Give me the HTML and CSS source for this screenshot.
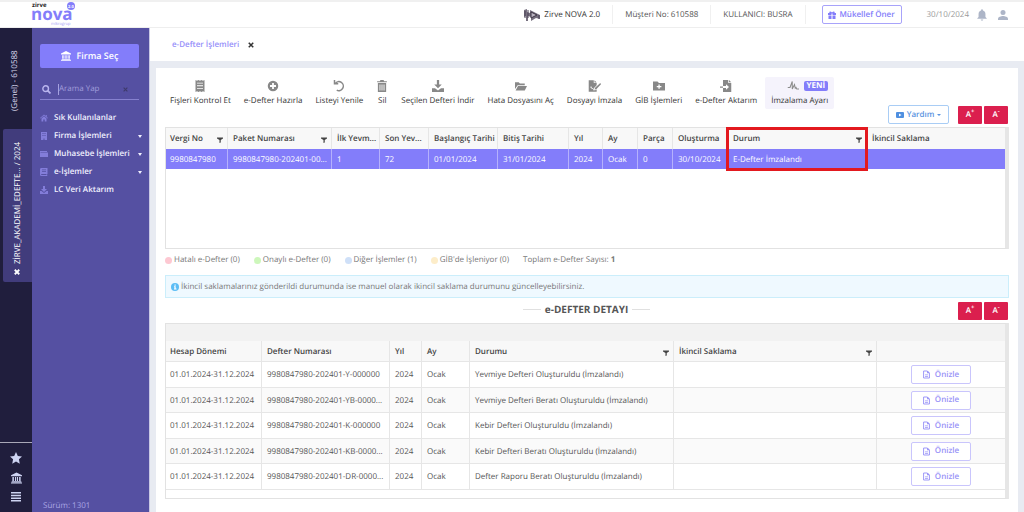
FILE: index.html
```html
<!DOCTYPE html>
<html lang="tr">
<head>
<meta charset="utf-8">
<title>Zirve NOVA - e-Defter İşlemleri</title>
<link rel="stylesheet" href="styles.css">
</head>
<body>
<svg class="sprite" aria-hidden="true">
  <symbol id="bank" viewBox="0 0 16 16"><path d="M8 0 0 4v1.6h16V4zM2 6.6h2.2v5.6H2zm3.8 0h1.6v5.6H5.8zm2.8 0h1.6v5.6H8.600zm3.200 0H14v5.600h-2.200zM1 12.800h14V14H1zM0 14.600h16V16H0z"/></symbol>
  <symbol id="funnel" viewBox="0 0 8 8"><path d="M0 .5h8v1.600L5 4v3.200L3.300 8V4L0 2.100z"/></symbol>
  <symbol id="doc" viewBox="0 0 12 14"><path d="M1 1h6.500L11 4.500V13H1z" fill="none" stroke="currentColor" stroke-width="1.600"/><path d="M7 1v4h4V4L8 1zM3.500 7h5v1.200h-5zm0 2.400h5v1.400h-5z"/></symbol>
</svg>

<div class="app">
  <header class="topbar">
    <a class="logo" href="#" aria-label="zirve nova">
      <svg width="46" height="25" viewBox="0 0 46 25">
        <circle cx="39" cy="4" r="4" fill="#837dfa"/>
        <text x="0" y="5" class="logo-zirve">zirve</text>
        <text x="-1" y="18" class="logo-nova">nova</text>
        <text x="36" y="6" class="logo-ver">2.0</text>
        <text x="19" y="23" class="logo-sub">mikrogrup</text>
      </svg>
    </a>
    <div class="top-items">
      <div class="top-item top-product">
        <svg width="18" height="14" viewBox="0 0 18 14"><path d="M1 2 4 1v3l3 1V2l10 5v4l-4-1-5 3V9L5 8v5H3V8L1 9z" fill="#77707f"/><path d="m8 4 6 3-6 3z" fill="#b9b2bf" stroke="#3c3544"/><path d="M2 3v7M5 2v8M16 7v4" stroke="#4b4257"/></svg>
        <span>Zirve NOVA 2.0</span>
      </div>
      <div class="top-item">Müşteri No: 610588</div>
      <div class="top-item">KULLANICI: BUSRA</div>
      <button class="outline-btn refer" type="button">
        <svg width="8" height="8" viewBox="0 0 16 16"><path d="M0 4h3C1 1 5-1 8 3c3-4 7-2 5 1h3v4H9V5H7v3H0zm1 5h6v7H1zm8 0h6v7H9z" fill="currentColor"/></svg>
        Mükellef Öner
      </button>
      <time class="date">30/10/2024</time>
      <button class="icon-btn" type="button" aria-label="Bildirimler"><svg width="10" height="12" viewBox="0 0 16 18"><path d="M8 0a1.500 1.500 0 0 1 1.500 1.600C12 2.200 13.500 4.500 13.500 7.500V12l2 2v1H.5v-1l2-2V7.500c0-3 1.500-5.300 4-5.900A1.500 1.500 0 0 1 8 0zM6 16h4c0 2.600-4 2.600-4 0z"/></svg></button>
      <button class="icon-btn" type="button" aria-label="Hesap"><svg width="10" height="10" viewBox="0 0 16 16"><circle cx="8" cy="4" r="4"/><path d="M0 16v-2c0-3 5-4.500 8-4.500s8 1.500 8 4.500v2z"/></svg></button>
    </div>
  </header>

  <div class="body">
    <aside class="rail">
      <button class="rail-tab" type="button">(Genel) - 610588</button>
      <button class="rail-tab active" type="button"><svg width="6" height="6" viewBox="0 0 8 8"><path d="m1 1 6 6M7 1 1 7" stroke="#fff" stroke-width="2.400"/></svg><span>ZİRVE_AKADEMİ_EDEFTE... / 2024</span></button>
      <div class="rail-tools">
        <button type="button" aria-label="Favoriler"><svg width="12" height="12" viewBox="0 0 16 16"><path d="m8 0 2.400 5.200 5.600.7-4.100 3.900L13 15.500l-5-2.800-5 2.800 1.100-5.700L0 5.900l5.600-.7z"/></svg></button>
        <button type="button" aria-label="Firmalar"><svg width="11" height="12"><use href="#bank"/></svg></button>
        <button type="button" aria-label="Menü"><svg width="10" height="10" viewBox="0 0 10 10"><path d="M0 0h10v1.500H0zm0 2.700h10v1.500H0zm0 2.700h10v1.500H0zm0 2.700h10v1.500H0z"/></svg></button>
      </div>
    </aside>

    <nav class="sidebar">
      <button class="company" type="button"><svg width="10" height="10"><use href="#bank"/></svg>Firma Seç</button>
      <div class="search">
        <svg width="9" height="9" viewBox="0 0 16 16"><circle cx="6.500" cy="6.500" r="5" fill="none" stroke="#b9b5ee" stroke-width="2.600"/><path d="m10 10 5 5" stroke="#b9b5ee" stroke-width="3"/></svg>
        <input type="text" placeholder="Arama Yap" aria-label="Arama Yap">
        <svg width="5" height="5" viewBox="0 0 8 8"><path d="m1 1 6 6M7 1 1 7" stroke="#3f3b6c" stroke-width="1.800"/></svg>
      </div>
      <ul class="menu">
        <li><a href="#"><svg width="8" height="8" viewBox="0 0 16 16"><path d="m8 1 8 7-1 1-7-6-7 6-1-1zM3 9l5-4.500L13 9v6H9.500v-4h-3v4H3zM11.500 2h2v4l-2-2z"/></svg><span>Sık Kullanılanlar</span></a></li>
        <li><a href="#"><svg width="8" height="8" viewBox="0 0 16 16"><path fill-rule="evenodd" d="M2 0h12v16H9v-3H7v3H2zm3 2v2h2V2zm4 0v2h2V2zM5 6v2h2V6zm4 0v2h2V6z"/></svg><span>Firma İşlemleri</span><i class="caret"></i></a></li>
        <li><a href="#"><svg width="8" height="8" viewBox="0 0 16 16"><path d="M0 2h14v2H1v1h15v9H0z"/></svg><span>Muhasebe İşlemleri</span><i class="caret"></i></a></li>
        <li><a href="#"><svg width="8" height="8" viewBox="0 0 16 16"><path fill-rule="evenodd" d="M3 0h12v12l-1 1v1l1 2H3c-3 0-3-2-3-3V3c0-2 1-3 3-3zm1 3v1.500h8V3zm0 3v1.500h8V6zM3 12c-1 0-1 2 0 2h10v-2z"/></svg><span>e-İşlemler</span><i class="caret"></i></a></li>
        <li><a href="#"><svg width="8" height="8" viewBox="0 0 16 16"><path d="M6 0h4v6h4l-6 6-6-6h4zM0 10h3l5 4 5-4h3v6H0z"/></svg><span>LC Veri Aktarım</span></a></li>
      </ul>
      <div class="version">Sürüm: 1301</div>
    </nav>

    <main class="main">
      <div class="tabs">
        <a class="tab" href="#">e-Defter İşlemleri</a>
        <button class="icon-btn tab-close" type="button" aria-label="Kapat"><svg width="6" height="6" viewBox="0 0 8 8"><path d="m1 1 6 6M7 1 1 7" stroke="#333" stroke-width="2"/></svg></button>
      </div>

      <section class="card">
        <div class="tools-row">
          <div class="toolbar">
            <button type="button"><svg width="12" height="12" viewBox="0 0 16 16"><path fill-rule="evenodd" d="m2 0 2 1 2-1 2 1 2-1 2 1 2-1v16l-2-1-2 1-2-1-2 1-2-1-2 1zm2 3.500v1.200h8V3.500zm0 3.500v1.200h8V7zm0 3.500v1.200h8v-1.200z"/></svg>Fişleri Kontrol Et</button>
            <button type="button"><svg width="12" height="12" viewBox="0 0 16 16"><path fill-rule="evenodd" d="M8 1a7 7 0 1 1 0 14A7 7 0 0 1 8 1zM6.800 4v2.800H4v2.400h2.800V12h2.400V9.200H12V6.800H9.200V4z"/></svg>e-Defter Hazırla</button>
            <button type="button"><svg width="12" height="12" viewBox="0 0 16 16"><path d="M3 4.500A6 6 0 1 1 5 13.500" fill="none" stroke="#888" stroke-width="2"/><path d="M1 0h2v4h4v2H1z"/></svg>Listeyi Yenile</button>
            <button type="button"><svg width="12" height="12" viewBox="0 0 16 16"><path fill-rule="evenodd" d="M1.500 1.500H5L6 0h4l1 1.500h3.500V3h-13zM2.500 4h11v12h-11zm2.200 2v8h1.200V6zm2.700 0v8h1.200V6zm2.700 0v8h1.200V6z"/></svg>Sil</button>
            <button type="button"><svg width="12" height="12" viewBox="0 0 16 16"><path d="M6.500 0h3v6H13l-5 5-5-5h3.500zM0 11h4l4 3 4-3h4v5H0z"/></svg>Seçilen Defteri İndir</button>
            <button type="button"><svg width="12" height="12" viewBox="0 0 16 16"><path d="M0 3h5l1.500 1.500H13V7H3.500L0 12zM4 8h12l-3 6H.8z"/></svg>Hata Dosyasını Aç</button>
            <button type="button"><svg width="13" height="12" viewBox="0 0 18 16"><path d="M1 0h7v4h4v3l-4 4-1 3h3l2-1v3H1zm8 0 3 3H9zM17 4l1 1.500-6.500 7L9 13l.8-2.500z"/><path d="M3 10l1.500-1 1 3 1.500-1" fill="none" stroke="#fff"/></svg>Dosyayı İmzala</button>
            <button type="button"><svg width="12" height="12" viewBox="0 0 16 16"><path fill-rule="evenodd" d="M0 2h6l2 2h8v10H0zm7.200 4v2H5v1.800h2.200v2H9v-2h2.200V8H9V6z"/></svg>GİB İşlemleri</button>
            <button type="button"><svg width="12" height="12" viewBox="0 0 16 16"><path fill-rule="evenodd" d="M4 0h7v4h4v12H4v-5.500h4V13l4-3.700L8 5.500V8H4zm8 0 3 3h-3zM0 8.500h4v1.800H0z"/></svg>e-Defter Aktarım</button>
            <button type="button" class="highlight"><span class="sign"><svg width="12" height="12" viewBox="0 0 16 16"><path d="M1 10h3l3-8v10l3-6 1 5 1-1 1 2h3" fill="none" stroke="#8b8b8b" stroke-width="1.400"/></svg><b class="new">YENİ</b></span>İmzalama Ayarı</button>
          </div>
          <div class="actions">
            <button class="outline-btn help" type="button"><svg width="8" height="6" viewBox="0 0 8 6"><rect width="8" height="6" rx="1" fill="#4f8fe0"/><path d="M3 1.500 5.500 3 3 4.500z" fill="#fff"/></svg>Yardım<i class="caret"></i></button>
            <div class="sizer"><button type="button">A<sup>+</sup></button><button type="button">A<sup>-</sup></button></div>
          </div>
        </div>

        <div class="grid packages">
          <table>
            <colgroup><col class="w62"><col class="w104"><col class="w48"><col class="w49"><col class="w69"><col class="w71"><col class="w34"><col class="w35"><col class="w35"><col class="w55"><col class="w139"><col></colgroup>
            <thead><tr>
              <th class="filtered">Vergi No<svg><use href="#funnel"/></svg></th>
              <th class="filtered">Paket Numarası<svg><use href="#funnel"/></svg></th>
              <th>İlk Yevm...</th><th>Son Yev...</th><th>Başlangıç Tarihi</th><th>Bitiş Tarihi</th><th>Yıl</th><th>Ay</th><th>Parça</th><th>Oluşturma</th>
              <th class="filtered marked">Durum<svg><use href="#funnel"/></svg></th>
              <th>İkincil Saklama</th>
            </tr></thead>
            <tbody><tr class="selected">
              <td>9980847980</td><td>9980847980-202401-00...</td><td>1</td><td>72</td><td>01/01/2024</td><td>31/01/2024</td><td>2024</td><td>Ocak</td><td>0</td><td>30/10/2024</td><td>E-Defter İmzalandı</td><td></td>
            </tr></tbody>
          </table>
        </div>

        <div class="legend">
          <span class="key red">Hatalı e-Defter (0)</span>
          <span class="key green">Onaylı e-Defter (0)</span>
          <span class="key blue">Diğer İşlemler (1)</span>
          <span class="key yellow">GİB'de İşleniyor (0)</span>
          <span>Toplam e-Defter Sayısı: <b>1</b></span>
        </div>

        <div class="info">
          <svg width="8" height="8" viewBox="0 0 16 16"><circle cx="8" cy="8" r="8" fill="#5cbdf5"/><path d="M7 3h2.400v2.400H7zM6 6.500h3.400V11H11v2H6v-2h1V8.500H6z" fill="#fff"/></svg>
          İkincil saklamalarınız gönderildi durumunda ise manuel olarak ikincil saklama durumunu güncelleyebilirsiniz.
        </div>

        <div class="detail-head">
          <h2>e-DEFTER DETAYI</h2>
          <div class="sizer"><button type="button">A<sup>+</sup></button><button type="button">A<sup>-</sup></button></div>
        </div>

        <div class="grid details">
          <div class="group-panel"></div>
          <table>
            <colgroup><col class="w96"><col class="w128"><col class="w32"><col class="w48"><col class="w204"><col class="w203"><col></colgroup>
            <thead><tr>
              <th>Hesap Dönemi</th><th>Defter Numarası</th><th>Yıl</th><th>Ay</th>
              <th class="filtered">Durumu<svg><use href="#funnel"/></svg></th>
              <th class="filtered">İkincil Saklama<svg><use href="#funnel"/></svg></th><th></th>
            </tr></thead>
            <tbody>
              <tr><td>01.01.2024-31.12.2024</td><td>9980847980-202401-Y-000000</td><td>2024</td><td>Ocak</td><td>Yevmiye Defteri Oluşturuldu (İmzalandı)</td><td></td><td class="act"><button class="outline-btn preview" type="button"><svg width="7" height="9"><use href="#doc"/></svg>Önizle</button></td></tr>
              <tr><td>01.01.2024-31.12.2024</td><td>9980847980-202401-YB-0000...</td><td>2024</td><td>Ocak</td><td>Yevmiye Defteri Beratı Oluşturuldu (İmzalandı)</td><td></td><td class="act"><button class="outline-btn preview" type="button"><svg width="7" height="9"><use href="#doc"/></svg>Önizle</button></td></tr>
              <tr><td>01.01.2024-31.12.2024</td><td>9980847980-202401-K-000000</td><td>2024</td><td>Ocak</td><td>Kebir Defteri Oluşturuldu (İmzalandı)</td><td></td><td class="act"><button class="outline-btn preview" type="button"><svg width="7" height="9"><use href="#doc"/></svg>Önizle</button></td></tr>
              <tr><td>01.01.2024-31.12.2024</td><td>9980847980-202401-KB-0000...</td><td>2024</td><td>Ocak</td><td>Kebir Defteri Beratı Oluşturuldu (İmzalandı)</td><td></td><td class="act"><button class="outline-btn preview" type="button"><svg width="7" height="9"><use href="#doc"/></svg>Önizle</button></td></tr>
              <tr><td>01.01.2024-31.12.2024</td><td>9980847980-202401-DR-0000...</td><td>2024</td><td>Ocak</td><td>Defter Raporu Beratı Oluşturuldu (İmzalandı)</td><td></td><td class="act"><button class="outline-btn preview" type="button"><svg width="7" height="9"><use href="#doc"/></svg>Önizle</button></td></tr>
            </tbody>
          </table>
        </div>
      </section>
    </main>
  </div>
</div>
</body>
</html>
```
FILE: styles.css
```css
*, *::before, *::after { box-sizing: border-box; }
body { margin: 0; background: #e8ebf2; color: #555; font: 8px/12px "Open Sans", "Noto Sans", sans-serif; text-rendering: geometricPrecision; }
button, input { font: inherit; color: inherit; margin: 0; padding: 0; border: 0; background: none; text-rendering: inherit; }
a { color: inherit; text-decoration: none; }
svg { display: block; flex: none; fill: currentColor; }
.sprite { position: absolute; width: 0; height: 0; }
.app { display: flex; flex-direction: column; min-height: 100vh; }

/* top bar */
.topbar { display: flex; justify-content: space-between; height: 28px; background: #fff; border-top: 2px solid #f0f0f0; border-bottom: 1px solid #eee; }
.logo { padding-left: 32px; }
.logo svg { overflow: visible; }
.logo-zirve { font: 700 6px "Open Sans", sans-serif; fill: #222; }
.logo-nova { font: 700 17px "Open Sans", sans-serif; fill: #837dfa; }
.logo-ver { font: 700 4px "Open Sans", sans-serif; fill: #fff; }
.logo-sub { font: 4px "Open Sans", sans-serif; fill: #a7a2f5; }
.top-items { display: flex; align-items: center; padding-right: 16px; }
.top-item { display: flex; align-items: center; height: 19px; padding: 1px 12px 0; border-right: 1px solid #f0f0f0; }
.top-product { gap: 3px; color: #333; }
.outline-btn { display: flex; align-items: center; justify-content: center; gap: 3px; height: 19px; border: 1px solid #a8a3fa; border-radius: 2px; background: #fff; color: #837dfa; font-weight: 600; }
.refer { width: 80px; margin-left: 16px; }
.date { margin: 0 8px 0 25px; padding-top: 1px; color: #999; }
.icon-btn { color: #adb5c7; }
.icon-btn + .icon-btn { margin-left: 11px; }

.body { display: flex; flex: 1; }

/* company rail */
.rail { display: flex; flex-direction: column; width: 32px; background: #201e3d; color: #dcdaf0; }
.rail-tab { display: flex; align-items: center; gap: 5px; writing-mode: vertical-rl; transform: rotate(180deg); height: 101px; width: 30px; padding-top: 18px; }
.rail-tab.active { width: 29px; height: 153px; margin-left: 3px; padding: 7px 0; background: #413c7c; border-radius: 0 2px 2px 0; color: #fff; }
.rail-tools { display: flex; flex-direction: column; align-items: center; gap: 8px; margin-top: auto; padding: 9px 0 10px; border-top: 1px solid #a9a8b8; color: #cdd3f2; }

/* menu */
.sidebar { display: flex; flex-direction: column; width: 118px; padding: 16px 10px 0 8px; background: #5550a2; border-right: 1px solid #c9c8e3; color: #fff; }
.company { display: flex; align-items: center; justify-content: center; gap: 6px; height: 24px; border-radius: 2px; background: #837dfa; font-size: 9px; font-weight: 600; }
.search { display: flex; align-items: center; gap: 7px; height: 21px; margin-top: 11px; padding: 0 11px 0 2px; border-bottom: 1px solid #8681cf; }
.search input { flex: 1; min-width: 0; border-left: 1px solid #a5a1e0; height: 11px; outline: none; }
.search input::placeholder { color: #a19ddb; opacity: 1; }
.menu { list-style: none; margin: 9px 0 0; padding: 0; }
.menu a { display: flex; align-items: center; gap: 6px; height: 18px; margin-right: -4px; font-weight: 600; white-space: nowrap; color: #f1f0ff; }
.menu svg { color: #837dda; }
.menu .caret { margin-left: auto; margin-right: 1px; }
.caret { border: 2px solid transparent; border-top: 3px solid currentColor; border-bottom: 0; }
.version { margin-top: auto; padding: 0 3px; color: #aaa6e4; }

/* content */
.main { flex: 1; min-width: 0; display: flex; flex-direction: column; }
.tabs { display: flex; align-items: center; gap: 9px; height: 33px; padding-left: 22px; background: #fff; }
.tab { color: #968ffa; font-weight: 600; }
.card { flex: 1; margin: 7px 6px 0; padding: 9px 9px 12px 9px; background: #fff; }
.tools-row { display: flex; justify-content: space-between; height: 47px; margin-bottom: 3px; }
.toolbar { display: flex; align-items: flex-start; gap: 3px; }
.toolbar button { display: flex; flex-direction: column; align-items: center; gap: 3px; height: 32px; padding: 3px 5px 0; color: #333; white-space: nowrap; border-radius: 2px; }
.toolbar svg { color: #888; }
.toolbar .highlight { padding: 3px 6px 0; background: #f5f3fc; }
.sign { display: flex; align-items: center; gap: 5px; align-self: flex-end; height: 12px; }
.new { padding: 0 3px; line-height: 10px; border-radius: 2px; background: #837dfa; color: #fff; }
.actions { display: flex; align-items: flex-end; gap: 9px; padding-right: 1px; }
.help { width: 61px; border-color: #a9cdf5; color: #5b94df; }
.help .caret { border-top-width: 2px; }
.sizer { display: flex; gap: 2px; }
.sizer button { width: 24px; height: 18px; border-radius: 1px; background: #db1f4e; color: #fff; font-weight: 600; line-height: 8px; }
.sizer sup { font-size: 6px; line-height: 0; }

/* grids */
.grid { border: 1px solid #e2e2e2; border-right: 4px solid #e6e6e6; }
.packages { height: 122px; }
table { width: 100%; table-layout: fixed; border-collapse: separate; border-spacing: 0; }
th, td { padding: 1px 1px 0 5px; text-align: left; white-space: nowrap; overflow: hidden; text-overflow: ellipsis; border-right: 1px solid #e6e6e6; }
th:first-child, td:first-child { padding-left: 4px; }
th:last-child, td:last-child { border-right: 0; }
th { position: relative; height: 21px; background: #f8f8f8; color: #444; font-weight: 600; }
th svg { position: absolute; right: 4px; top: 9px; width: 6px; height: 6px; color: #444; }
.packages .selected td { height: 20px; background: #837dfa; color: #fff; border-color: #b5b1fc; }
.packages .marked { overflow: visible; }
.marked::after { content: ""; position: absolute; top: -1px; left: -2px; right: -2px; height: 44px; border: 3px solid #e3191f; z-index: 1; }
.w32 { width: 32px; } .w34 { width: 34px; } .w35 { width: 35px; } .w48 { width: 48px; } .w49 { width: 49px; }
.w55 { width: 55px; } .w62 { width: 62px; } .w69 { width: 69px; } .w71 { width: 71px; } .w96 { width: 96px; }
.w104 { width: 104px; } .w128 { width: 128px; } .w139 { width: 139px; } .w203 { width: 203px; } .w204 { width: 204px; }

.legend { display: flex; gap: 14px; padding-top: 5px; color: #777; }
.key { display: flex; align-items: center; gap: 2px; }
.key::before { content: ""; width: 7px; height: 7px; border-radius: 50%; background: var(--dot); }
.red { --dot: #fdc8d2; } .green { --dot: #cdf7bb; } .blue { --dot: #cfe0f8; } .yellow { --dot: #fdedc9; }
.info { display: flex; align-items: center; gap: 2px; height: 23px; margin-top: 9px; padding: 0 5px; border: 1px solid #cbeefb; background: #eff9ff; color: #777; }
.detail-head { display: grid; grid-template-columns: 1fr auto 1fr; align-items: center; height: 25px; padding-right: 1px; }
.detail-head h2 { grid-column: 2; display: flex; align-items: center; gap: 4px; margin: 0 0 3px; font-size: 10px; color: #555; }
.detail-head h2::before, .detail-head h2::after { content: ""; width: 18px; border-top: 1px solid #e0e0e0; }
.detail-head .sizer { justify-self: end; }
.group-panel { height: 17px; background: #f2f2f2; }
.details { padding-bottom: 8px; }
.details th, .details td { border-bottom: 1px solid #e6e6e6; }
.details td { height: 26px; }
.details tbody tr:nth-child(even) td { height: 25px; background: #fafafa; }
.details .act { padding: 0; }
.preview { width: 60px; margin: 0 auto; gap: 5px; border-color: #c9c5fc; color: #9791f7; }
```
